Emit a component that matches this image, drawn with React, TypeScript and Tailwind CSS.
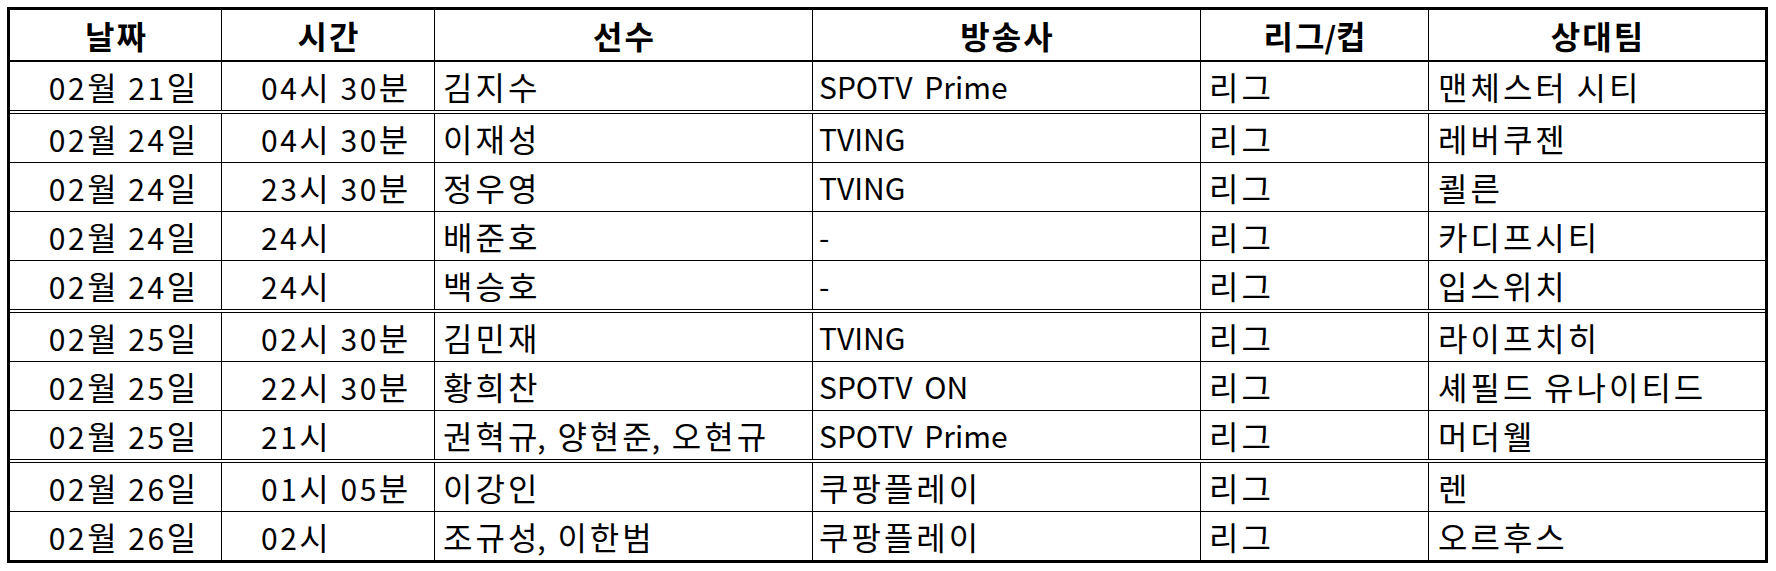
import React from 'react';

type Row = {
  date: string;
  time: string;
  player: string;
  channel: string;
  league: string;
  opponent: string;
  double?: boolean;
};

const rows: Row[] = [
  { date: '02월 21일', time: '04시 30분', player: '김지수', channel: 'SPOTV Prime', league: '리그', opponent: '맨체스터 시티', double: true },
  { date: '02월 24일', time: '04시 30분', player: '이재성', channel: 'TVING', league: '리그', opponent: '레버쿠젠' },
  { date: '02월 24일', time: '23시 30분', player: '정우영', channel: 'TVING', league: '리그', opponent: '쾰른' },
  { date: '02월 24일', time: '24시', player: '배준호', channel: '-', league: '리그', opponent: '카디프시티' },
  { date: '02월 24일', time: '24시', player: '백승호', channel: '-', league: '리그', opponent: '입스위치', double: true },
  { date: '02월 25일', time: '02시 30분', player: '김민재', channel: 'TVING', league: '리그', opponent: '라이프치히' },
  { date: '02월 25일', time: '22시 30분', player: '황희찬', channel: 'SPOTV ON', league: '리그', opponent: '셰필드 유나이티드' },
  { date: '02월 25일', time: '21시', player: '권혁규, 양현준, 오현규', channel: 'SPOTV Prime', league: '리그', opponent: '머더웰', double: true },
  { date: '02월 26일', time: '01시 05분', player: '이강인', channel: '쿠팡플레이', league: '리그', opponent: '렌' },
  { date: '02월 26일', time: '02시', player: '조규성, 이한범', channel: '쿠팡플레이', league: '리그', opponent: '오르후스' },
];

const headers = ['날짜', '시간', '선수', '방송사', '리그/컵', '상대팀'];

const grid = 'grid grid-cols-[212px_213px_378px_388px_228px_336px]';
const cell = 'flex items-center border-r border-black whitespace-nowrap';

// The source font draws hangul larger and digits wider than Noto, so size the runs up a little
function Txt({ s, bold }: { s: string; bold?: boolean }) {
  const parts = s.split(/([가-힣]+|[0-9]+)/).filter(Boolean);
  return (
    <span>
      {parts.map((p, i) => {
        if (/[가-힣]/.test(p)) {
          return (
            <span key={i} className="text-[32px]">
              <span className={bold ? 'tracking-[2px]' : 'tracking-[3px]'}>{p.slice(0, -1)}</span>
              {p.slice(-1)}
            </span>
          );
        }
        if (/[0-9]/.test(p)) {
          return <span key={i} className="tracking-[2.5px]">{p}</span>;
        }
        return <span key={i} className="[word-spacing:5px]">{p}</span>;
      })}
    </span>
  );
}

export default function App() {
  return (
    <div className="min-h-screen bg-white pl-[7px] pt-[7px] font-['Noto_Sans_CJK_KR','Noto_Sans',sans-serif] text-black">
      <div className="w-[1761px] border-[3px] border-black">
        {/* Header */}
        <div className={`${grid} h-[52px] border-b-2 border-black text-[30px] font-bold`}>
          {headers.map((h, i) => (
            <div key={h} className={`${i < 5 ? cell : 'flex items-center whitespace-nowrap'} justify-center`}>
              <Txt s={h} bold />
            </div>
          ))}
        </div>

        {/* Body */}
        {rows.map((r, i) => (
          <div
            key={i}
            className={`${grid} text-[30px] leading-none ${
              i === rows.length - 1
                ? 'h-[48px]'
                : r.double
                ? 'h-[52px] border-b-4 border-double border-black'
                : 'h-[49px] border-b border-black'
            }`}
          >
            <div className={`${cell} justify-center pl-[14px]`}><Txt s={r.date} /></div>
            <div className={`${cell} pl-[39px]`}><Txt s={r.time} /></div>
            <div className={`${cell} pl-[8px]`}><Txt s={r.player} /></div>
            <div className={`${cell} pl-[6px]`}><Txt s={r.channel} /></div>
            <div className={`${cell} pl-[8px]`}><Txt s={r.league} /></div>
            <div className="flex items-center whitespace-nowrap pl-[9px]"><Txt s={r.opponent} /></div>
          </div>
        ))}
      </div>
    </div>
  );
}
